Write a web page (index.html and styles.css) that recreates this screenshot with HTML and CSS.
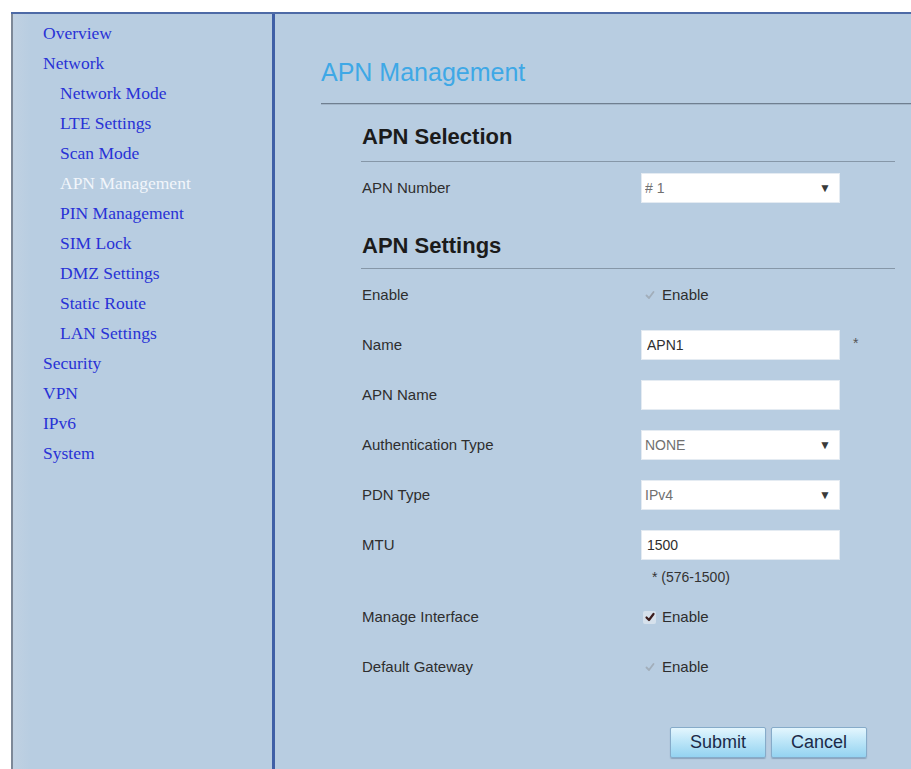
FILE: index.html
```html
<!DOCTYPE html>
<html lang="en">
<head>
<meta charset="utf-8">
<title>APN Management</title>
<link rel="stylesheet" href="styles.css">
</head>
<body>
<div class="frame">
  <nav class="sidebar">
    <a class="nav-item" href="#">Overview</a>
    <a class="nav-item" href="#">Network</a>
    <a class="nav-item sub" href="#">Network Mode</a>
    <a class="nav-item sub" href="#">LTE Settings</a>
    <a class="nav-item sub" href="#">Scan Mode</a>
    <a class="nav-item sub active" href="#">APN Management</a>
    <a class="nav-item sub" href="#">PIN Management</a>
    <a class="nav-item sub" href="#">SIM Lock</a>
    <a class="nav-item sub" href="#">DMZ Settings</a>
    <a class="nav-item sub" href="#">Static Route</a>
    <a class="nav-item sub" href="#">LAN Settings</a>
    <a class="nav-item" href="#">Security</a>
    <a class="nav-item" href="#">VPN</a>
    <a class="nav-item" href="#">IPv6</a>
    <a class="nav-item" href="#">System</a>
  </nav>

  <main class="main">
    <h1 class="page-title">APN Management</h1>

    <form class="content">
      <h2 class="section-title">APN Selection</h2>
      <div class="row">
        <label class="row-label">APN Number</label>
        <div class="row-field">
          <span class="select-wrap">
            <select class="select muted"><option># 1</option></select>
            <span class="arrow">&#9660;</span>
          </span>
        </div>
      </div>

      <h2 class="section-title">APN Settings</h2>
      <div class="row">
        <label class="row-label">Enable</label>
        <div class="row-field">
          <span class="check disabled">
            <svg viewBox="0 0 12 12" width="12" height="12"><path d="M2.5 6.5 L5 9 L9.5 3"/></svg>
          </span>
          <span class="check-text">Enable</span>
        </div>
      </div>
      <div class="row">
        <label class="row-label">Name</label>
        <div class="row-field">
          <input class="text-input" type="text" value="APN1">
          <span class="required">*</span>
        </div>
      </div>
      <div class="row">
        <label class="row-label">APN Name</label>
        <div class="row-field">
          <input class="text-input" type="text" value="">
        </div>
      </div>
      <div class="row">
        <label class="row-label">Authentication Type</label>
        <div class="row-field">
          <span class="select-wrap">
            <select class="select muted"><option>NONE</option></select>
            <span class="arrow">&#9660;</span>
          </span>
        </div>
      </div>
      <div class="row">
        <label class="row-label">PDN Type</label>
        <div class="row-field">
          <span class="select-wrap">
            <select class="select muted"><option>IPv4</option></select>
            <span class="arrow">&#9660;</span>
          </span>
        </div>
      </div>
      <div class="row">
        <label class="row-label">MTU</label>
        <div class="row-field stacked">
          <input class="text-input" type="text" value="1500">
          <span class="hint">* (576-1500)</span>
        </div>
      </div>
      <div class="row">
        <label class="row-label">Manage Interface</label>
        <div class="row-field">
          <span class="check on">
            <svg viewBox="0 0 12 12" width="12" height="12"><path d="M2.5 6.5 L5 9 L9.5 3"/></svg>
          </span>
          <span class="check-text">Enable</span>
        </div>
      </div>
      <div class="row">
        <label class="row-label">Default Gateway</label>
        <div class="row-field">
          <span class="check disabled">
            <svg viewBox="0 0 12 12" width="12" height="12"><path d="M2.5 6.5 L5 9 L9.5 3"/></svg>
          </span>
          <span class="check-text">Enable</span>
        </div>
      </div>

      <div class="actions">
        <button class="btn" type="button">Submit</button>
        <button class="btn" type="button">Cancel</button>
      </div>
    </form>
  </main>
</div>
</body>
</html>
```

FILE: styles.css
```css
html, body {
  margin: 0;
  padding: 0;
  background: #ffffff;
}

body {
  font-family: "Liberation Sans", Arial, sans-serif;
  color: #333333;
}

.frame {
  display: flex;
  margin: 12px 0 0 11px;
  height: 757px;
  border-top: 2px solid #4d6aa6;
  background: #b8cde1;
  box-sizing: border-box;
}

/* ---------- left navigation ---------- */
.sidebar {
  width: 259px;
  flex: none;
  padding-top: 4px;
  border-left: 2px solid #7d8897;
  border-right: 3px solid #3f5fa6;
  background: linear-gradient(to right, #c0d1e2 0, #b8cde1 18px);
}

.nav-item {
  display: block;
  height: 30px;
  line-height: 30px;
  padding-left: 30px;
  font-family: "Liberation Serif", "Times New Roman", serif;
  font-size: 17.5px;
  color: #2832d6;
  text-decoration: none;
  white-space: nowrap;
}

.nav-item.sub {
  padding-left: 47px;
}

.nav-item.active {
  color: #f2f6fb;
}

/* ---------- main panel ---------- */
.main {
  flex: 1;
  min-width: 0;
}

.page-title {
  margin: 43px 0 0 46px;
  padding-bottom: 16px;
  height: 30px;
  line-height: 30px;
  font-size: 25px;
  font-weight: normal;
  color: #3ea8e6;
  border-bottom: 1px solid #6f7f90;
  box-shadow: 0 1px 0 #a3b6c9;
}

.content {
  margin: 0;
  padding: 0 16px 0 86px;
}

.section-title {
  margin: 18px 0 0;
  padding: 0 0 9px 1px;
  height: 30px;
  line-height: 30px;
  font-size: 22px;
  font-weight: bold;
  color: #1b1b1b;
  border-bottom: 1px solid #8697a8;
}

.row + .section-title {
  margin-top: 28px;
  padding-bottom: 7px;
}

.row {
  display: flex;
  align-items: flex-start;
  margin-top: 20px;
}

.section-title + .row {
  margin-top: 11px;
}

.row-label {
  width: 280px;
  flex: none;
  padding-left: 1px;
  box-sizing: border-box;
  height: 30px;
  line-height: 30px;
  font-size: 15px;
  color: #2e2e2e;
}

.row-field {
  display: flex;
  align-items: center;
  min-height: 30px;
}

.row-field.stacked {
  flex-direction: column;
  align-items: flex-start;
}

.text-input,
.select {
  width: 199px;
  height: 30px;
  margin: 0;
  padding: 0 5px;
  box-sizing: border-box;
  border: 1px solid #e4ebf2;
  background: #ffffff;
  font-family: "Liberation Sans", Arial, sans-serif;
  font-size: 14px;
  color: #2e2e2e;
  outline: none;
}

.select {
  appearance: none;
  -webkit-appearance: none;
  padding-left: 3px;
}

.select.muted {
  color: #707070;
}

.select-wrap {
  position: relative;
  display: inline-block;
  height: 30px;
}

.arrow {
  position: absolute;
  right: 9px;
  top: 8px;
  font-size: 12px;
  line-height: 14px;
  color: #3a3a3a;
  pointer-events: none;
}

.required {
  margin-left: 13px;
  margin-top: -4px;
  font-size: 14px;
  color: #555555;
}

.hint {
  margin: 8px 0 -4px 11px;
  line-height: 18px;
  font-size: 14px;
  color: #333333;
}

.check {
  display: inline-flex;
  align-items: center;
  justify-content: center;
  width: 13px;
  height: 13px;
  margin-left: 2px;
  box-sizing: border-box;
}

.check svg {
  fill: none;
  stroke-linecap: round;
  stroke-linejoin: round;
}

.check.disabled svg {
  stroke: #a2aeba;
  stroke-width: 1.8;
}

.check.on {
  background: #d6e1ec;
  border-radius: 2px;
}

.check.on svg {
  stroke: #3b1c1c;
  stroke-width: 2.2;
}

.check-text {
  margin-left: 6px;
  font-size: 15px;
  line-height: 30px;
  color: #2e2e2e;
}

.actions {
  display: flex;
  justify-content: flex-end;
  gap: 5px;
  margin: 45px 28px 0 0;
}

.btn {
  width: 96px;
  height: 31px;
  padding: 0;
  border: 1px solid #86abc9;
  border-radius: 2px;
  background: linear-gradient(to bottom, #e4f6fe 0%, #bde6f8 45%, #94d3f1 100%);
  box-shadow: 0 1px 1px rgba(60, 90, 120, 0.35);
  font-family: "Liberation Sans", Arial, sans-serif;
  font-size: 18px;
  color: #1b2a48;
  cursor: pointer;
}
```
